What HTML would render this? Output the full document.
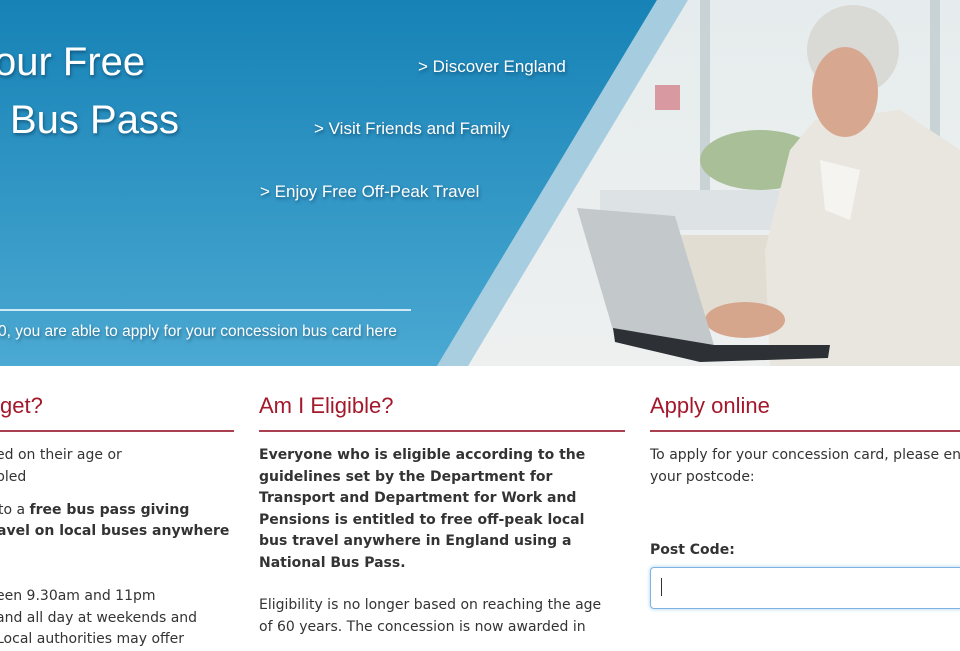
<!DOCTYPE html>
<html><head><meta charset="utf-8"><style>
html,body{margin:0;padding:0;width:960px;height:640px;overflow:hidden;background:#fff}
.t{position:absolute;font-family:"DejaVu Sans",Verdana,sans-serif;font-size:14px;color:#333;white-space:nowrap;line-height:21.5px}
.b{font-weight:bold}
.h{position:absolute;font-family:"Liberation Sans",sans-serif;font-size:22px;color:#a3182b;top:393px}
.ln{position:absolute;top:430px;height:2px;background:#a84050}
.bt{position:absolute;font-family:"Liberation Sans",sans-serif;color:#fff;white-space:nowrap;text-shadow:1px 2px 3px rgba(0,40,70,.5)}
</style></head><body>
<svg width="960" height="366" style="position:absolute;left:0;top:0">
<defs>
<linearGradient id="bg" x1="0" y1="0" x2="0" y2="1"><stop offset="0" stop-color="#1682b6"/><stop offset="1" stop-color="#4ba9d2"/></linearGradient>
<linearGradient id="rm" x1="0" y1="0" x2="0" y2="1"><stop offset="0" stop-color="#e6eced"/><stop offset="1" stop-color="#eef0f0"/></linearGradient>
</defs>
<rect width="960" height="366" fill="url(#rm)"/>
<rect x="700" y="0" width="10" height="200" fill="#c9d3d6"/>
<rect x="930" y="0" width="10" height="200" fill="#c9d3d6"/>
<ellipse cx="760" cy="160" rx="60" ry="30" fill="#a9bf98"/>
<rect x="655" y="85" width="25" height="25" fill="#d89aa0"/>
<rect x="600" y="190" width="360" height="40" fill="#dde3e5"/>
<rect x="660" y="235" width="200" height="90" fill="#e2ddd3"/>
<polygon points="815,120 900,110 960,150 960,366 770,366 765,250 790,150" fill="#e9e6df"/>
<polygon points="820,160 860,170 850,220 825,210" fill="#f6f4f0"/>
<ellipse cx="853" cy="50" rx="46" ry="45" fill="#d9d9d6"/>
<ellipse cx="845" cy="92" rx="33" ry="45" fill="#d7a88f"/>
<ellipse cx="745" cy="320" rx="40" ry="18" fill="#d5a58c"/>
<polygon points="577,208 675,216 714,345 613,330" fill="#c3c8cb"/>
<polygon points="613,328 714,345 830,345 828,358 700,362 615,342" fill="#2d3034"/>
<polygon points="0,0 657,0 437,366 0,366" fill="url(#bg)"/>
<polygon points="657,0 688,0 468,366 437,366" fill="#6fb3d3" opacity=".55"/>
<rect x="0" y="309" width="411" height="2" fill="#cfeaf6"/>
</svg>
<div class="bt" style="left:-6px;top:40px;font-size:40px">our Free</div>
<div class="bt" style="left:10px;top:98px;font-size:40px">Bus Pass</div>
<div class="bt" style="left:418px;top:57px;font-size:17px">&gt; Discover England</div>
<div class="bt" style="left:314px;top:119px;font-size:17px">&gt; Visit Friends and Family</div>
<div class="bt" style="left:260px;top:182px;font-size:17px">&gt; Enjoy Free Off-Peak Travel</div>
<div class="bt" style="left:-2px;top:323px;font-size:15.5px">0, you are able to apply for your concession bus card here</div>

<div class="h" style="left:0">get?</div>
<div class="ln" style="left:0;width:234px"></div>
<div class="t" style="left:-4px;top:445px">ed on their age or<br>bled</div>
<div class="t" style="left:-2px;top:500px">to a <span class="b">free bus pass giving</span></div>
<div class="t b" style="left:-3px;top:521px">avel on local buses anywhere</div>
<div class="t" style="left:-4px;top:586px">een 9.30am and 11pm<br>and all day at weekends and<br>Local authorities may offer</div>

<div class="h" style="left:259px">Am I Eligible?</div>
<div class="ln" style="left:259px;width:366px"></div>
<div class="t b" style="left:259px;top:445px">Everyone who is eligible according to the<br>guidelines set by the Department for<br>Transport and Department for Work and<br>Pensions is entitled to free off-peak local<br>bus travel anywhere in England using a<br>National Bus Pass.</div>
<div class="t" style="left:259px;top:595px">Eligibility is no longer based on reaching the age<br>of 60 years. The concession is now awarded in</div>

<div class="h" style="left:650px">Apply online</div>
<div class="ln" style="left:650px;width:310px"></div>
<div class="t" style="left:650px;top:445px">To apply for your concession card, please enter<br>your postcode:</div>
<div class="t b" style="left:650px;top:540px">Post Code:</div>
<div style="position:absolute;left:650px;top:567px;width:330px;height:40px;border:1px solid #7fb4e0;border-radius:4px;box-shadow:0 0 4px #a8cff0;background:#fff"></div>
<div style="position:absolute;left:661px;top:578px;width:1px;height:18px;background:#333"></div>
</body></html>
